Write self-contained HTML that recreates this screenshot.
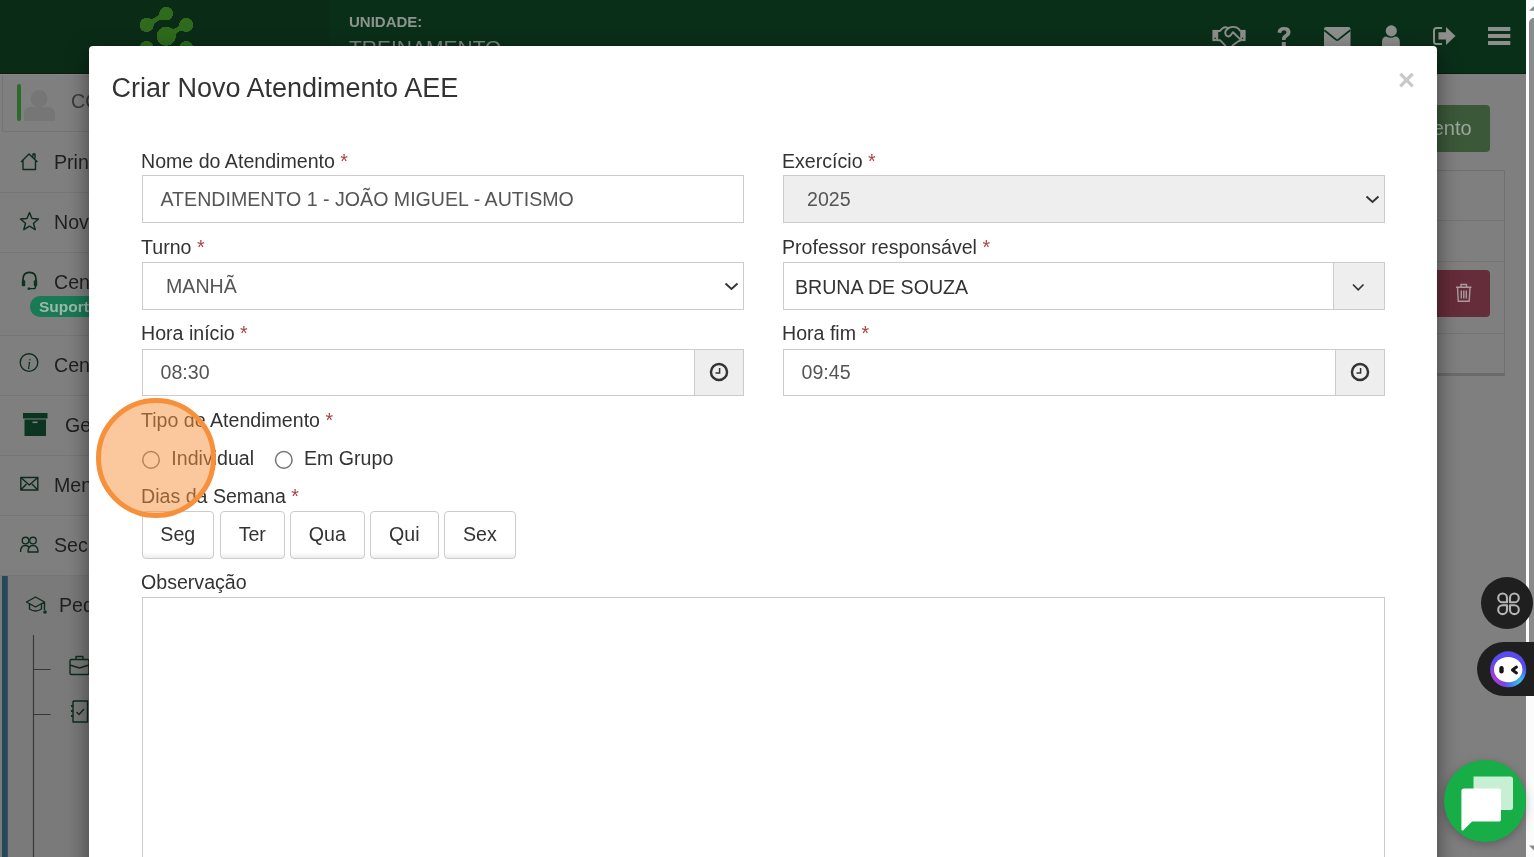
<!DOCTYPE html>
<html><head><meta charset="utf-8">
<style>
*{box-sizing:border-box;margin:0;padding:0}
html,body{-webkit-font-smoothing:antialiased;width:1534px;height:857px;overflow:hidden;font-family:"Liberation Sans",sans-serif;background:#7f7f7f;position:relative}
.abs{position:absolute}
#root{position:absolute;left:0;top:0;width:1534px;height:857px;overflow:hidden;will-change:transform;background:#7f7f7f}
/* header */
#hdr{position:absolute;left:0;top:0;width:1526px;height:74px;background:#0a2f19}
#hdrl{position:absolute;left:0;top:0;width:329px;height:74px;background:#0a2c17}
#unid{position:absolute;left:349px;top:13px;font-size:15px;font-weight:bold;color:#8c948e;letter-spacing:0}
#trein{position:absolute;left:349px;top:36px;font-size:21px;color:#7c857f}
/* sidebar */
#side{position:absolute;left:0;top:74px;width:260px;height:783px;background:#7f7f7f}
.sep{position:absolute;left:0;width:260px;height:1px;background:#757575}
.si{position:absolute;font-size:19.6px;color:#1f1f1f;white-space:nowrap}
/* content right */
#btnG{position:absolute;left:1300px;top:105px;width:189.6px;height:47.3px;background:#3b5839;border-radius:4px;color:#9ea99e;font-size:20px;text-align:right;padding:12px 18px 0 0}
/* modal */
#modal{position:absolute;left:89px;top:46px;width:1348px;height:850px;background:#fff;border-radius:4px;box-shadow:0 7px 21px rgba(0,0,0,.5)}
.lbl{position:absolute;font-size:19.6px;color:#333;white-space:nowrap;line-height:28px}
.req{color:#a94442}
.inp{position:absolute;height:47.6px;border:1.4px solid #ccc;background:#fff;font-size:19.6px;color:#555;line-height:45px;white-space:nowrap}
.addon{position:absolute;top:-1px;height:47.6px;border:1.4px solid #ccc;background:#eee}
.btn{position:absolute;top:511.4px;height:47.2px;border:1.4px solid #ccc;border-radius:4px;background:linear-gradient(#fff 0,#fff 88%,#ececec 100%);font-size:19.6px;color:#333;text-align:center;line-height:44px}
</style></head><body>
<div id="root">

<div id="hdr"></div>
<div id="hdrl"></div>
<div class="abs" style="left:0;top:72.5px;width:1526px;height:1.2px;background:#04200f"></div>
<svg class="abs" style="left:130px;top:0" width="70" height="60" viewBox="130 0 70 60">
  <defs><filter id="goo" x="-20%" y="-20%" width="140%" height="140%"><feGaussianBlur in="SourceGraphic" stdDeviation="1.6"/><feColorMatrix values="1 0 0 0 0  0 1 0 0 0  0 0 1 0 0  0 0 0 14 -6"/></filter></defs>
  <g fill="#2f6a1f" stroke="#2f6a1f" filter="url(#goo)">
  <line x1="146.6" y1="24.9" x2="166.2" y2="13.7" stroke-width="4.5"/>
  <line x1="166.2" y1="36" x2="186.2" y2="24.9" stroke-width="4.5"/>
  <circle cx="166.2" cy="13.7" r="6.9" stroke="none"/>
  <circle cx="146.6" cy="24.9" r="7.1" stroke="none"/>
  <circle cx="186.2" cy="24.9" r="7.1" stroke="none"/>
  <circle cx="166.2" cy="36.2" r="9.6" stroke="none"/>
  <circle cx="146.6" cy="48" r="7.1" stroke="none"/>
  <circle cx="186.2" cy="48" r="7.1" stroke="none"/>
  </g>
</svg>
<div id="unid">UNIDADE:</div>
<div id="trein">TREINAMENTO</div>

<!-- header icons -->
<svg class="abs" style="left:1200px;top:15px" width="320" height="35" viewBox="1200 15 320 35">
 <g fill="#8c8f8c">
  <!-- handshake -->
  <rect x="1212.4" y="29.9" width="5.8" height="11.2"/>
  <rect x="1240.2" y="29.9" width="5.4" height="11.2"/>
  <circle cx="1215.2" cy="38.3" r="0.8" fill="#08301b"/>
  <circle cx="1242.6" cy="38.3" r="0.8" fill="#08301b"/>
  <g fill="none" stroke="#8c8f8c" stroke-width="1.9" stroke-linejoin="round" stroke-linecap="round">
  <path d="M1218 31 L1220 31 Q1222.5 27.2 1225.5 27.1 Q1227.3 27.1 1228.3 28.3"/>
  <path d="M1227.4 28.6 Q1230 26.8 1233.3 26.9 Q1236.8 27 1238.4 28.7 L1240 30.6"/>
  <path d="M1228.3 28.3 Q1225 30.5 1225.2 33.2 Q1225.8 36.6 1228.6 36.5 Q1230.2 36.3 1231.2 34.5 L1233 32.2 L1240.2 39.3"/>
  <path d="M1218 40.3 L1220.3 40.3 L1225.3 45.6"/>
  <path d="M1240.3 40.5 Q1238.8 41 1237.3 42 L1232.5 45.6"/>
  </g>
  <!-- question -->
  <path d="M1277.5 32.5 Q1278 27 1284 27 Q1290.5 27 1290.5 32.3 Q1290.5 35.3 1287.5 37 Q1285.5 38 1285.5 40 L1282 40 Q1281.5 36.5 1284.5 34.8 Q1286.5 33.6 1286.5 32.3 Q1286.5 30.3 1284 30.3 Q1281.5 30.3 1281.3 33 Z"/>
  <rect x="1281.8" y="42" width="4" height="4.5"/>
  <!-- envelope -->
  <path d="M1325.8 27 L1348.7 27 Q1350.5 27 1350.5 29 L1350.5 46 L1324 46 L1324 29 Q1324 27 1325.8 27 Z"/>
  <path d="M1324.3 30.2 L1336 39.6 Q1337.2 40.5 1338.4 39.6 L1350.2 30.2" fill="none" stroke="#08301b" stroke-width="1.8"/>
  <!-- user -->
  <circle cx="1391.3" cy="30.9" r="5.6"/>
  <path d="M1382 46 L1382 42 Q1382 36.5 1386.5 36.5 Q1390.8 39 1395 36.5 Q1399.8 36.5 1399.8 42 L1399.8 46 Z"/>
  <!-- sign out -->
  <path d="M1442 28 L1436.5 28 Q1434 28 1434 30.5 L1434 41.5 Q1434 44 1436.5 44 L1442 44" fill="none" stroke="#8c8f8c" stroke-width="2"/>
  <path d="M1438.5 32.3 L1446 32.3 L1446 27 L1455.5 36 L1446 45 L1446 39.5 L1438.5 39.5 Z"/>
  <!-- bars -->
  <rect x="1488" y="27" width="22.3" height="4"/>
  <rect x="1488" y="34" width="22.3" height="4"/>
  <rect x="1488" y="41" width="22.3" height="4"/>
 </g>
</svg>

<!-- sidebar -->
<div id="side"></div>
<div class="abs" style="left:0;top:74px;width:260px;height:1px;background:#868686"></div>
<div class="abs" style="left:2px;top:75px;width:258px;height:57px;border-left:1px solid #747474;border-bottom:1px solid #747474"></div>
<div class="abs" style="left:16.8px;top:83.5px;width:4.4px;height:37.5px;background:#2a6b2a;border-radius:2px"></div>
<svg class="abs" style="left:20px;top:85px" width="40" height="40" viewBox="20 85 40 40">
  <circle cx="39" cy="98.8" r="8.5" fill="#767676"/>
  <path d="M24 121 L24 114 Q24 107 31 107 L47 107 Q55 107 55 114 L55 121 Z" fill="#767676"/>
</svg>
<div class="si" style="left:71px;top:90px;color:#3a3a3a">COORDENADOR</div>

<div class="sep" style="top:192px"></div>
<div class="sep" style="top:252px"></div>
<div class="sep" style="top:335px"></div>
<div class="sep" style="top:395px"></div>
<div class="sep" style="top:455px"></div>
<div class="sep" style="top:515px"></div>
<div class="sep" style="top:575px"></div>
<div class="abs" style="left:0;top:576px;width:260px;height:281px;background:#7a7a7a"></div>

<svg class="abs" style="left:0;top:140px" width="100" height="720" viewBox="0 140 100 720">
 <g fill="none" stroke="#0d2c1c" stroke-width="1.4" stroke-linejoin="round">
  <!-- house -->
  <path d="M21 162 L29 154 L37.5 162 M23 160 L23 169.5 L35.5 169.5 L35.5 160 M33 156.5 L33 154 L35 154 L35 158.5"/>
  <!-- star -->
  <path d="M29.5 212.5 L32 218.5 L38.5 219 L33.5 223.3 L35.2 229.7 L29.5 226.2 L23.8 229.7 L25.5 223.3 L20.5 219 L27 218.5 Z"/>
  <!-- headset -->
  <path d="M23 282 L23 279.5 Q23 272.3 29.5 272.3 Q36 272.3 36 279.5 L36 282" stroke-width="1.7"/>
  <path d="M35.5 285 L35.5 287 Q35.5 288.6 33.5 288.6 L28.5 288.6" stroke-width="1.4"/>
  <!-- info -->
  <circle cx="29" cy="362.5" r="8.8" stroke-width="1.35"/>
  <!-- envelope -->
  <rect x="20.8" y="477.5" width="17" height="12.5" stroke-width="1.4"/>
  <path d="M20.8 477.5 L29.3 485 L37.8 477.5 M20.8 490 L26.5 484 M37.8 490 L32 484" stroke-width="1.4"/>
  <!-- people -->
  <circle cx="25.5" cy="540.5" r="3.3" stroke-width="1.35"/>
  <circle cx="33" cy="540.5" r="3.3" stroke-width="1.35"/>
  <path d="M20.5 552 Q20.5 545.5 25.5 545.5 Q28.5 545.5 29.5 548 M28 552 Q28 545.5 33 545.5 Q38 545.5 38 552 Z" stroke-width="1.35"/>
  <!-- grad cap -->
  <path d="M26.5 602 L35.5 597 L44.5 602 L35.5 607 Z M29.5 604 L29.5 609 Q35.5 613 41.5 609 L41.5 604 M44.5 602 L44.5 610" stroke-width="1.4"/>
  <!-- briefcase -->
  <rect x="70" y="659.5" width="19" height="15" rx="1.5" stroke-width="1.4"/>
  <path d="M76 659.5 L76 656.5 L83 656.5 L83 659.5 M70 665 L79.5 668 L89 665" stroke-width="1.35"/>
  <!-- checklist -->
  <path d="M73 701 L87.5 701 L87.5 722 L73 722 L73 701" stroke-width="1.4"/>
  <path d="M76.5 712 L79 714.5 L84 709" stroke-width="1.35"/>
 </g>
 <g fill="#0b3520">
  <rect x="27.5" y="287.5" width="3" height="2.2" rx="1"/>
  <rect x="21.8" y="280.2" width="3.4" height="6" rx="1"/>
  <rect x="33.8" y="280.2" width="3.4" height="6" rx="1"/>
  <text x="29" y="368.5" font-family="Liberation Serif" font-style="italic" font-size="15" text-anchor="middle">i</text>
  <!-- archive filled -->
  <rect x="23" y="413" width="24.5" height="5.5"/>
  <rect x="24.5" y="419.5" width="21.5" height="16.5"/>
  <circle cx="45" cy="612" r="1.8"/>
  <rect x="71" y="705" width="2.2" height="2"/><rect x="71" y="710" width="2.2" height="2"/><rect x="71" y="715" width="2.2" height="2"/>
 </g>
 <rect x="32.5" y="421.5" width="5" height="1.6" fill="#7f7f7f"/>
 <!-- tree lines -->
 <path d="M33.5 635 L33.5 860 M33.5 669.5 L50.5 669.5 M33.5 714.5 L50.5 714.5" stroke="#363636" stroke-width="1.1" fill="none"/>
 <!-- pedagogico left bar -->
 <rect x="2" y="576" width="5.8" height="290" fill="#254959"/>
</svg>

<div class="si" style="left:54px;top:151px">Principal</div>
<div class="si" style="left:54px;top:211px">Novidades</div>
<div class="si" style="left:54px;top:271px">Central</div>
<div class="abs" style="left:30px;top:296px;width:120px;height:20.5px;border-radius:10px;background:#187a56;color:#a0b8aa;font-weight:bold;font-size:15.5px;line-height:22px;padding-left:9px">Suporte</div>
<div class="si" style="left:54px;top:354px">Central</div>
<div class="si" style="left:65px;top:414px">Gestão</div>
<div class="si" style="left:54px;top:474px">Mensagens</div>
<div class="si" style="left:54px;top:534px">Secretaria</div>
<div class="si" style="left:59px;top:594px">Pedagógico</div>

<!-- right content -->
<div id="btnG">Novo Atendimento</div>
<div class="abs" style="left:1300px;top:170.4px;width:204.5px;height:205.3px;border:1.2px solid #707070;border-bottom:3px solid #6b6b6b"></div>
<div class="abs" style="left:1300px;top:220px;width:204px;height:1.2px;background:#747474"></div>
<div class="abs" style="left:1300px;top:261px;width:204px;height:1.2px;background:#747474"></div>
<div class="abs" style="left:1300px;top:333px;width:204px;height:1.2px;background:#747474"></div>
<div class="abs" style="left:1400px;top:270px;width:89.5px;height:47px;background:#652c39;border-radius:4px"></div>
<svg class="abs" style="left:1453px;top:282px" width="22" height="24" viewBox="1453 282 22 24">
  <g fill="none" stroke="#a99a9e" stroke-width="1.4">
   <path d="M1456 287.3 L1471.5 287.3 M1461 287.3 L1461 284.5 L1466.5 284.5 L1466.5 287.3 M1457.5 287.3 L1458.3 301.3 L1469.2 301.3 L1470 287.3 M1461.3 290.5 L1461.3 298.5 M1463.8 290.5 L1463.8 298.5 M1466.3 290.5 L1466.3 298.5"/>
  </g>
</svg>

<div id="modal">
  <div class="abs" style="left:22.5px;top:26px;font-size:27px;color:#333;white-space:nowrap;line-height:32px">Criar Novo Atendimento AEE</div>
  <div class="abs" style="left:1309px;top:19px;font-size:29px;font-weight:bold;color:#c8c8c8;line-height:30px">×</div>
</div>


<!-- form -->
<div class="lbl" style="left:141px;top:147px">Nome do Atendimento <span class="req">*</span></div>
<div class="inp" style="left:142px;top:175px;width:602px;padding-left:17.5px;padding-top:1px">ATENDIMENTO 1 - JOÃO MIGUEL - AUTISMO</div>

<div class="lbl" style="left:141px;top:233px">Turno <span class="req">*</span></div>
<div class="inp" style="left:142px;top:262px;width:602px;padding-left:23px;padding-top:1px">MANHÃ
  <svg class="abs" style="left:581px;top:19px" width="15" height="9" viewBox="0 0 15 9"><path d="M1.5 1.5 L7.5 7 L13.5 1.5" fill="none" stroke="#333" stroke-width="1.9"/></svg>
</div>

<div class="lbl" style="left:141px;top:319px">Hora início <span class="req">*</span></div>
<div class="inp" style="left:142px;top:348.5px;width:602px;padding-left:17.5px">08:30
  <div class="addon" style="left:551px;width:50px"><svg class="abs" style="left:12.5px;top:11.8px" width="22" height="22" viewBox="0 0 22 22"><circle cx="11" cy="11" r="8.05" fill="none" stroke="#333" stroke-width="2.45"/><path d="M11.6 6.9 L11.6 11.9 L7.5 11.9" fill="none" stroke="#333" stroke-width="1.5"/></svg></div>
</div>

<div class="lbl" style="left:782px;top:147px">Exercício <span class="req">*</span></div>
<div class="inp" style="left:783px;top:175px;width:602px;padding-left:23px;padding-top:1px;background:#eee">2025
  <svg class="abs" style="left:581px;top:19px" width="15" height="9" viewBox="0 0 15 9"><path d="M1.5 1.5 L7.5 7 L13.5 1.5" fill="none" stroke="#333" stroke-width="1.9"/></svg>
</div>

<div class="lbl" style="left:782px;top:233px">Professor responsável <span class="req">*</span></div>
<div class="inp" style="left:783px;top:262px;width:602px;padding-left:11px;padding-top:2px;color:#333">BRUNA DE SOUZA
  <div class="addon" style="left:549px;width:52px"><svg class="abs" style="left:18px;top:19.5px" width="13" height="9" viewBox="0 0 13 9"><path d="M1 1.5 L6.2 6.8 L11.5 1.5" fill="none" stroke="#333" stroke-width="1.7"/></svg></div>
</div>

<div class="lbl" style="left:782px;top:319px">Hora fim <span class="req">*</span></div>
<div class="inp" style="left:783px;top:348.5px;width:602px;padding-left:17.5px">09:45
  <div class="addon" style="left:551px;width:50px"><svg class="abs" style="left:12.5px;top:11.8px" width="22" height="22" viewBox="0 0 22 22"><circle cx="11" cy="11" r="8.05" fill="none" stroke="#333" stroke-width="2.45"/><path d="M11.6 6.9 L11.6 11.9 L7.5 11.9" fill="none" stroke="#333" stroke-width="1.5"/></svg></div>
</div>

<div class="lbl" style="left:141px;top:406px">Tipo de Atendimento <span class="req">*</span></div>
<svg class="abs" style="left:130px;top:440px" width="180" height="40" viewBox="130 440 180 40"><g fill="none" stroke="#747474" stroke-width="1.5"><circle cx="151" cy="459.9" r="8.3"/><circle cx="283.8" cy="459.9" r="8.3"/></g></svg>
<div class="lbl" style="left:171.3px;top:444px">Individual</div>

<div class="lbl" style="left:304px;top:444px">Em Grupo</div>

<div class="lbl" style="left:141px;top:482px">Dias da Semana <span class="req">*</span></div>
<div class="btn" style="left:142px;width:71.5px">Seg</div>
<div class="btn" style="left:220px;width:64.5px">Ter</div>
<div class="btn" style="left:290px;width:74.6px">Qua</div>
<div class="btn" style="left:370px;width:68.5px">Qui</div>
<div class="btn" style="left:444px;width:71.7px">Sex</div>

<div class="lbl" style="left:141px;top:568px">Observação</div>
<div class="abs" style="left:142px;top:597px;width:1243px;height:300px;border:1.4px solid #ccc"></div>

<!-- orange highlight -->
<div class="abs" style="left:95.5px;top:398.2px;width:120px;height:120px;border-radius:50%;border:5.5px solid #f7903a;background:rgba(247,143,58,.5)"></div>

<!-- scrollbar -->
<div class="abs" style="left:1525.6px;top:0;width:9px;height:857px;background:#fbfbfb"></div>
<div class="abs" style="left:1529.2px;top:17.8px;width:10px;height:672px;border-radius:5px;background:#8b8b8b"></div>
<svg class="abs" style="left:1526px;top:0" width="8" height="857" viewBox="1526 0 8 857">
 <path d="M1529 10.7 L1534.5 5.5 L1540 10.7 Z" fill="#8b8b8b"/>
 <path d="M1529 845.5 L1534.5 851 L1540 845.5 Z" fill="#8b8b8b"/>
</svg>
<!-- floating widgets -->
<div class="abs" style="left:1481.2px;top:576.7px;width:52px;height:52px;border-radius:50%;background:#1f1f1f"></div>
<svg class="abs" style="left:1495px;top:590.5px" width="28" height="28" viewBox="0 0 28 28"><g fill="none" stroke="#b4b4b4" stroke-width="2.1" stroke-linejoin="round"><path d="M12.00 11.30 L12.00 6.90 A4.4 4.4 0 1 0 7.60 11.30 Z"/><path d="M15.00 11.30 L15.00 6.90 A4.4 4.4 0 1 1 19.40 11.30 Z"/><path d="M12.00 14.30 L12.00 18.70 A4.4 4.4 0 1 1 7.60 14.30 Z"/><path d="M15.00 14.30 L15.00 18.70 A4.4 4.4 0 1 0 19.40 14.30 Z"/></g></svg>
<div class="abs" style="left:1477.3px;top:641.8px;width:100px;height:54px;border-radius:27px;background:#1f1f1f"></div>
<svg class="abs" style="left:1488px;top:649px" width="40" height="40" viewBox="0 0 40 40">
 <defs>
  <radialGradient id="rm" cx="0.12" cy="0.78" r="0.5"><stop offset="0" stop-color="#b03ad0" stop-opacity="1"/><stop offset="1" stop-color="#b03ad0" stop-opacity="0"/></radialGradient>
  <radialGradient id="rc" cx="0.85" cy="0.88" r="0.45"><stop offset="0" stop-color="#2ed0e4" stop-opacity="1"/><stop offset="1" stop-color="#2ed0e4" stop-opacity="0"/></radialGradient>
 </defs>
 <circle cx="20.2" cy="20.3" r="18" fill="#5a4cec"/>
 <circle cx="20.2" cy="20.3" r="18" fill="url(#rm)"/>
 <circle cx="20.2" cy="20.3" r="18" fill="url(#rc)"/>
 <ellipse cx="20.2" cy="20.6" rx="14.2" ry="12.7" fill="#fff"/>
 <rect x="11.3" y="16.9" width="4.4" height="7.6" rx="2.2" fill="#161616"/>
 <path d="M28.5 18 L24.4 21 L28.5 24" fill="none" stroke="#161616" stroke-width="2.9" stroke-linecap="round" stroke-linejoin="round"/>
</svg>
<div class="abs" style="left:1443.6px;top:759.7px;width:82px;height:82px;border-radius:50%;background:#17ad47;box-shadow:0 3px 10px rgba(0,0,0,.25)"></div>
<svg class="abs" style="left:1455px;top:770px" width="64" height="64" viewBox="1455 770 64 64">
 <path d="M1473.5 776.5 L1510.5 776.5 Q1513 776.5 1513 779 L1513 807.5 Q1513 810 1510.5 810 L1473.5 810 Z" fill="#c6efd3"/>
 <path d="M1464 788.4 L1498.5 788.4 Q1501 788.4 1501 791 L1501 819 Q1501 821.6 1498.5 821.6 L1472 821.6 L1463 830.5 Q1461.4 831 1461.4 829 L1461.4 791 Q1461.4 788.4 1464 788.4 Z" fill="#fff"/>
</svg>

</div>
</body></html>
